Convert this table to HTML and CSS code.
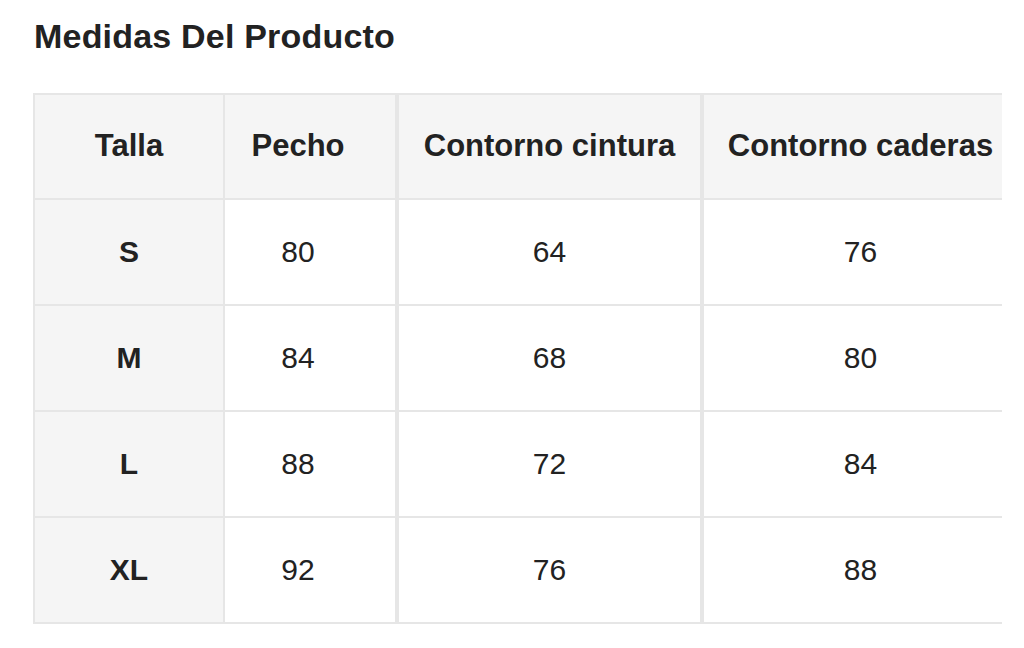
FILE: index.html
```html
<!DOCTYPE html>
<html lang="es">
<head>
<meta charset="utf-8">
<title>Medidas Del Producto</title>
<link rel="stylesheet" href="styles.css">
</head>
<body>
<div class="page">
  <h1 class="title">Medidas Del Producto</h1>
  <div class="table-wrap">
    <table class="sizes">
      <thead>
        <tr>
          <th class="c1">Talla</th>
          <th class="c2">Pecho</th>
          <th class="c3">Contorno cintura</th>
          <th class="c4">Contorno caderas</th>
        </tr>
      </thead>
      <tbody>
        <tr><th class="c1">S</th><td class="c2">80</td><td class="c3">64</td><td class="c4">76</td></tr>
        <tr><th class="c1">M</th><td class="c2">84</td><td class="c3">68</td><td class="c4">80</td></tr>
        <tr><th class="c1">L</th><td class="c2">88</td><td class="c3">72</td><td class="c4">84</td></tr>
        <tr><th class="c1">XL</th><td class="c2">92</td><td class="c3">76</td><td class="c4">88</td></tr>
      </tbody>
    </table>
  </div>
</div>
</body>
</html>
```

FILE: styles.css
```css
html, body {
  margin: 0;
  padding: 0;
  background: #ffffff;
}

body {
  font-family: "Liberation Sans", Arial, sans-serif;
  color: #222222;
}

.page {
  padding: 16px 0 0 34px;
}

.title {
  margin: 0;
  font-size: 34px;
  line-height: 40px;
  letter-spacing: 0.2px;
  font-weight: bold;
  color: #222222;
}

.table-wrap {
  margin-top: 37px;
  margin-left: -1px;
  width: 969px;
  overflow: hidden;
}

.sizes {
  border-collapse: separate;
  border-spacing: 0;
  table-layout: fixed;
  width: 986px;
  border-top: 2px solid #e6e6e6;
  border-left: 2px solid #e6e6e6;
}

.sizes th,
.sizes td {
  box-sizing: border-box;
  padding: 0;
  text-align: center;
  vertical-align: middle;
  font-size: 30px;
  border-right: 2px solid #e6e6e6;
  border-bottom: 2px solid #e6e6e6;
  height: 106px;
}

.sizes th {
  font-weight: bold;
  background: #f5f5f5;
}

.sizes td {
  font-weight: normal;
  background: #ffffff;
}

.sizes thead th {
  height: 105px;
  font-size: 31px;
  padding-bottom: 2px;
}

.sizes .c1 { width: 190px; }
.sizes .c2 { width: 174px; border-right-width: 4px; padding-right: 24px; }
.sizes .c3 { width: 305px; border-right-width: 4px; }
.sizes .c4 { width: 315px; }
```
